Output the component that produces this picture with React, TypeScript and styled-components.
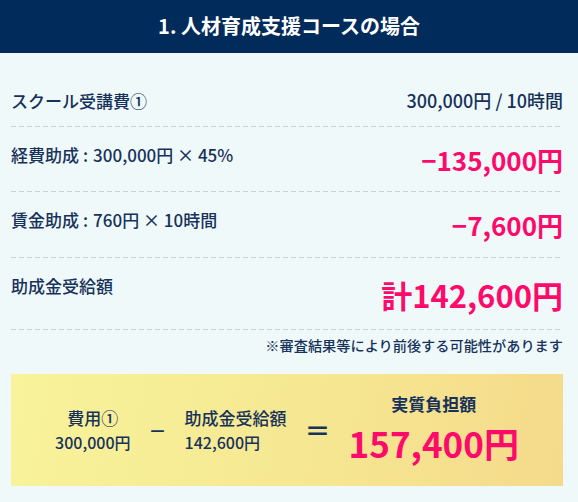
import React from "react";
import styled, { createGlobalStyle } from "styled-components";

const Global = createGlobalStyle`
  html, body { margin: 0; padding: 0; background: #eff9fa; }
  body { font-family: "Noto Sans CJK JP", "Noto Sans", sans-serif; color: #17325a; }
  * { box-sizing: border-box; }
`;

const Page = styled.div`
  width: 578px;
  min-height: 502px;
  background: #eff9fa;
`;

const Header = styled.h2`
  margin: 0;
  height: 53px;
  padding-bottom: 2px;
  background: #012b5b;
  color: #fff;
  font-size: 20px;
  font-weight: 700;
  display: flex;
  align-items: center;
  justify-content: center;
`;

const Body = styled.div`
  padding: 20px 15px 0 11px;
`;

const Row = styled.div`
  display: flex;
  justify-content: space-between;
  align-items: flex-start;
  padding: 15px 0 14px;
  background-image: linear-gradient(to right, #c8d2d7 60%, transparent 60%);
  background-size: 8px 1px;
  background-repeat: repeat-x;
  background-position: left bottom;
`;

const Label = styled.div`
  font-size: 17px;
  line-height: 25px;
  font-weight: 500;
  color: #17325a;
`;

const Colon = styled.span`
  margin: 0 5px 0 4px;
`;

const Value = styled.div<{ $size: number; $pink?: boolean }>`
  font-size: ${(p) => p.$size}px;
  line-height: ${(p) => (p.$pink ? 1.4 : "25px")};
  font-weight: ${(p) => (p.$pink ? 700 : 500)};
  color: ${(p) => (p.$pink ? "#fd0a6b" : "#17325a")};
  text-align: right;
`;

const Note = styled.p`
  margin: 5px 0 0;
  text-align: right;
  font-size: 14.2px;
  line-height: 21px;
  font-weight: 500;
  color: #17325a;
`;

const Summary = styled.div`
  margin-top: 18px;
  height: 112px;
  background: linear-gradient(100deg, #f8f39c 0%, #f6e893 50%, #f5da8b 100%);
  display: flex;
  align-items: center;
  justify-content: center;
  gap: 18px;
`;

const Term = styled.div<{ $align: "center" | "left" }>`
  display: flex;
  flex-direction: column;
  align-items: ${(p) => (p.$align === "center" ? "center" : "flex-start")};
  font-size: 16px;
  line-height: 25px;
  font-weight: 500;
  color: #17325a;
`;

const TermLabel = styled.span`
  font-size: 17px;
`;

const Operator = styled.span<{ $size: number }>`
  font-size: ${(p) => p.$size}px;
  font-weight: 700;
  line-height: 1;
  color: #17325a;
`;

const Result = styled.div`
  display: flex;
  flex-direction: column;
  align-items: center;
`;

const ResultLabel = styled.span`
  font-size: 17px;
  line-height: 25px;
  font-weight: 700;
  color: #17325a;
`;

const ResultValue = styled.span`
  font-size: 35px;
  line-height: 53px;
  font-weight: 700;
  color: #fd0a6b;
`;

export default function App() {
  return (
    <Page>
      <Global />
      <Header>1. 人材育成支援コースの場合</Header>
      <Body>
        <Row>
          <Label>スクール受講費①</Label>
          <Value $size={18}>300,000円 / 10時間</Value>
        </Row>
        <Row>
          <Label>
            経費助成<Colon>:</Colon>300,000円 × 45%
          </Label>
          <Value $size={26} $pink>−135,000円</Value>
        </Row>
        <Row>
          <Label>
            賃金助成<Colon>:</Colon>760円 × 10時間
          </Label>
          <Value $size={26} $pink>−7,600円</Value>
        </Row>
        <Row>
          <Label>助成金受給額</Label>
          <Value $size={31} $pink>計142,600円</Value>
        </Row>
        <Note>※審査結果等により前後する可能性があります</Note>
        <Summary>
          <Term $align="center">
            <TermLabel>費用①</TermLabel>
            <span>300,000円</span>
          </Term>
          <Operator $size={18}>－</Operator>
          <Term $align="left">
            <TermLabel>助成金受給額</TermLabel>
            <span>142,600円</span>
          </Term>
          <Operator $size={26}>＝</Operator>
          <Result>
            <ResultLabel>実質負担額</ResultLabel>
            <ResultValue>157,400円</ResultValue>
          </Result>
        </Summary>
      </Body>
    </Page>
  );
}
